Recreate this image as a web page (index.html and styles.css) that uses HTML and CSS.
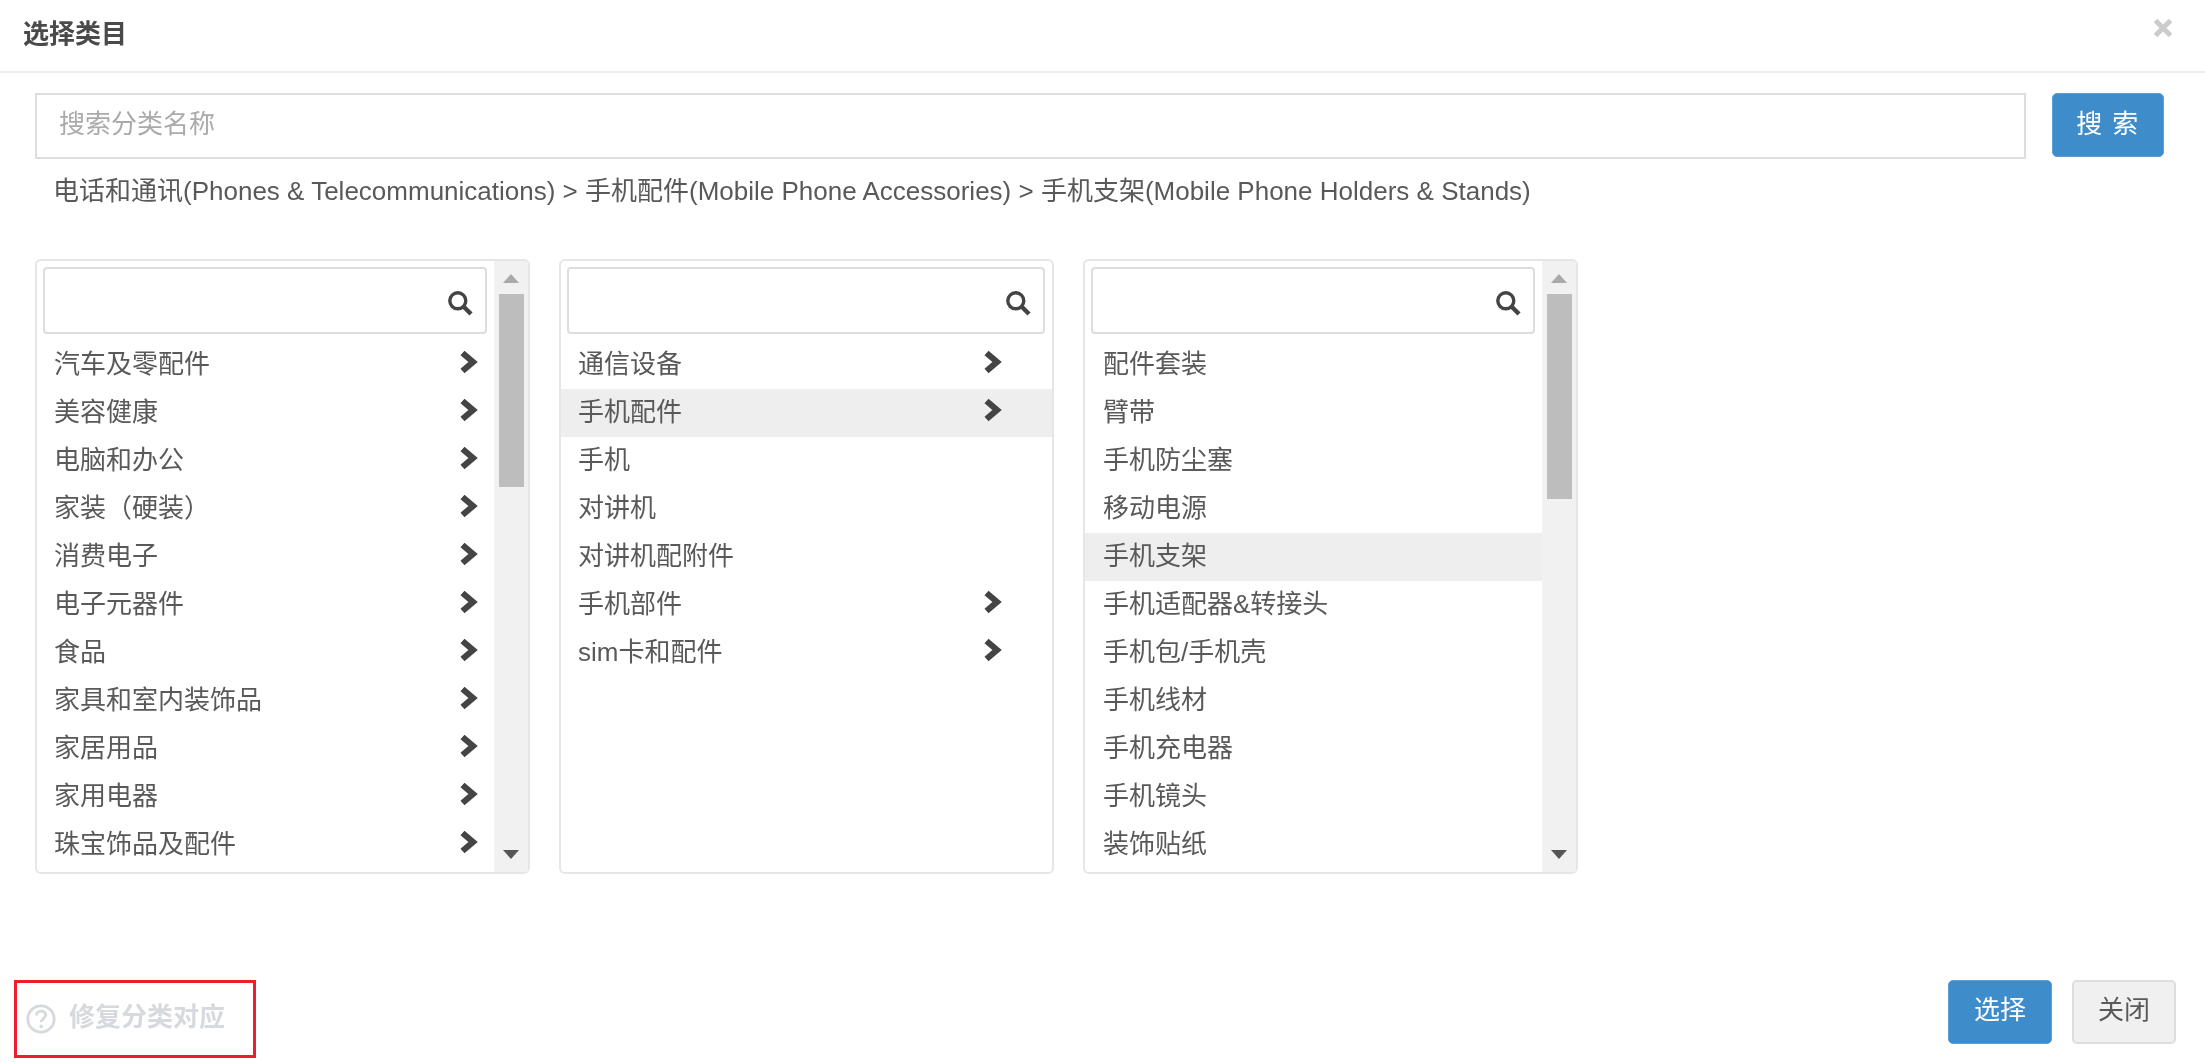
FILE: index.html
```html
<!DOCTYPE html>
<html lang="zh-CN">
<head>
<meta charset="utf-8">
<title>选择类目</title>
<link rel="stylesheet" href="styles.css">
</head>
<body>
<svg class="defs" width="0" height="0" aria-hidden="true">
  <symbol id="chev" viewBox="0 0 19 24"><path d="M3.5 3 L14 12 L3.5 21" fill="none" stroke="currentColor" stroke-width="6.2" stroke-linejoin="miter"/></symbol>
  <symbol id="mag" viewBox="0 0 26 26"><circle cx="10.8" cy="10.8" r="8" fill="none" stroke="currentColor" stroke-width="3.4"/><path d="M16.5 16.5 L24 24" fill="none" stroke="currentColor" stroke-width="4.4"/></symbol>
</svg>
<div class="dialog">
  <header class="head">
    <h1 class="title">选择类目</h1>
    <svg class="close" viewBox="0 0 20 20"><path d="M2.5 2.5 L17.5 17.5 M17.5 2.5 L2.5 17.5" stroke="currentColor" stroke-width="5" fill="none"/></svg>
  </header>
  <main class="body">
    <div class="search">
      <input class="search-input" type="text" placeholder="搜索分类名称">
      <button class="btn btn-primary btn-search">搜 索</button>
    </div>
    <p class="crumb">电话和通讯(Phones &amp; Telecommunications) &gt; 手机配件(Mobile Phone Accessories) &gt; 手机支架(Mobile Phone Holders &amp; Stands)</p>
    <div class="panels">
      <section class="panel">
        <div class="list">
          <div class="filter"><svg class="mag"><use href="#mag"/></svg></div>
          <ul class="rows">
            <li class="row"><span class="label">汽车及零配件</span><svg class="chev"><use href="#chev"/></svg></li>
            <li class="row"><span class="label">美容健康</span><svg class="chev"><use href="#chev"/></svg></li>
            <li class="row"><span class="label">电脑和办公</span><svg class="chev"><use href="#chev"/></svg></li>
            <li class="row"><span class="label">家装（硬装）</span><svg class="chev"><use href="#chev"/></svg></li>
            <li class="row"><span class="label">消费电子</span><svg class="chev"><use href="#chev"/></svg></li>
            <li class="row"><span class="label">电子元器件</span><svg class="chev"><use href="#chev"/></svg></li>
            <li class="row"><span class="label">食品</span><svg class="chev"><use href="#chev"/></svg></li>
            <li class="row"><span class="label">家具和室内装饰品</span><svg class="chev"><use href="#chev"/></svg></li>
            <li class="row"><span class="label">家居用品</span><svg class="chev"><use href="#chev"/></svg></li>
            <li class="row"><span class="label">家用电器</span><svg class="chev"><use href="#chev"/></svg></li>
            <li class="row"><span class="label">珠宝饰品及配件</span><svg class="chev"><use href="#chev"/></svg></li>
          </ul>
        </div>
        <div class="scroll"><span class="arrow-up"></span><span class="thumb thumb-a"></span><span class="arrow-down"></span></div>
      </section>
      <section class="panel panel-plain">
        <div class="list">
          <div class="filter"><svg class="mag"><use href="#mag"/></svg></div>
          <ul class="rows">
            <li class="row"><span class="label">通信设备</span><svg class="chev"><use href="#chev"/></svg></li>
            <li class="row row-on"><span class="label">手机配件</span><svg class="chev"><use href="#chev"/></svg></li>
            <li class="row"><span class="label">手机</span></li>
            <li class="row"><span class="label">对讲机</span></li>
            <li class="row"><span class="label">对讲机配附件</span></li>
            <li class="row"><span class="label">手机部件</span><svg class="chev"><use href="#chev"/></svg></li>
            <li class="row"><span class="label">sim卡和配件</span><svg class="chev"><use href="#chev"/></svg></li>
          </ul>
        </div>
      </section>
      <section class="panel panel-leaf">
        <div class="list">
          <div class="filter"><svg class="mag"><use href="#mag"/></svg></div>
          <ul class="rows">
            <li class="row"><span class="label">配件套装</span></li>
            <li class="row"><span class="label">臂带</span></li>
            <li class="row"><span class="label">手机防尘塞</span></li>
            <li class="row"><span class="label">移动电源</span></li>
            <li class="row row-on"><span class="label">手机支架</span></li>
            <li class="row"><span class="label">手机适配器&amp;转接头</span></li>
            <li class="row"><span class="label">手机包/手机壳</span></li>
            <li class="row"><span class="label">手机线材</span></li>
            <li class="row"><span class="label">手机充电器</span></li>
            <li class="row"><span class="label">手机镜头</span></li>
            <li class="row"><span class="label">装饰贴纸</span></li>
          </ul>
        </div>
        <div class="scroll"><span class="arrow-up"></span><span class="thumb thumb-b"></span><span class="arrow-down"></span></div>
      </section>
    </div>
  </main>
  <footer class="foot">
    <div class="fix">
      <svg class="help" viewBox="0 0 30 30"><circle cx="15" cy="15" r="13.2" fill="none" stroke="currentColor" stroke-width="2.8"/><path d="M10.4 11.6c0-2.8 2-4.5 4.7-4.5s4.6 1.6 4.6 4c0 3.4-4.5 3.5-4.5 7" fill="none" stroke="currentColor" stroke-width="2.8"/><circle cx="15.2" cy="22.4" r="1.8" fill="currentColor"/></svg>
      <span class="fix-text">修复分类对应</span>
    </div>
    <div class="actions">
      <button class="btn btn-primary btn-foot"><span class="btn-label">选择</span></button>
      <button class="btn btn-plain btn-foot"><span class="btn-label">关闭</span></button>
    </div>
  </footer>
</div>
</body>
</html>
```

FILE: styles.css
```css
* { box-sizing: border-box; }
html, body { margin: 0; padding: 0; background: #fff; }
body { font-family: "Liberation Sans", "Noto Sans CJK SC", sans-serif; font-size: 26px; color: #595959; }
.defs { display: block; height: 0; }
.dialog { display: flex; flex-direction: column; width: 2205px; height: 1062px; overflow: hidden; filter: blur(0.7px); }

.head { display: flex; justify-content: space-between; align-items: flex-start; height: 73px; padding: 0 32px 0 23px; border-bottom: 2px solid #eee; flex: none; }
.title { margin: 0; font-size: 26px; font-weight: 700; line-height: 68px; color: #4a4a4a; }
.close { width: 20px; height: 20px; margin-top: 18px; color: #ccc; }

.body { flex: 1; padding: 20px 41px 0 35px; }
.search { display: flex; align-items: flex-start; justify-content: space-between; }
.search-input { width: 1991px; height: 66px; padding: 0 22px 3px; border: 2px solid #ddd; background: #fff; font: inherit; color: #555; outline: none; }
.search-input::placeholder { color: #aaa; opacity: 1; }

.btn { border-radius: 5px; font: inherit; line-height: 1; padding: 0; }
.btn-primary { background: #3f8ccb; border: 1px solid #5a9ed6; color: #fff; }
.btn-plain { background: #f0f0f0; border: 2px solid #ddd; color: #595959; }
.btn-search { width: 112px; height: 64px; padding-bottom: 3px; letter-spacing: 1.5px; }
.btn-foot { width: 104px; height: 64px; }
.btn-label { display: block; margin-top: -5px; }

.crumb { margin: 14px 0 0; padding-left: 18px; line-height: 36px; font-size: 26px; white-space: nowrap; }

.panels { display: flex; gap: 29px; margin-top: 50px; }
.panel { display: flex; width: 495px; height: 615px; border: 2px solid #e6e6e6; border-radius: 6px; overflow: hidden; background: #fff; }
.list { flex: 1; min-width: 0; }
.filter { display: flex; align-items: center; justify-content: flex-end; height: 67px; margin: 6px 7px 7px 6px; padding: 4px 12px 0 0; border: 2px solid #ddd; border-radius: 4px; }
.panel-plain .filter { margin-right: 7px; margin-left: 6px; padding-right: 12px; }
.mag { width: 26px; height: 26px; color: #444; }
.rows { margin: 0; padding: 0; list-style: none; }
.row { display: flex; align-items: center; justify-content: space-between; height: 48px; padding: 0 16px 0 17px; line-height: 48px; white-space: nowrap; }
.panel-plain .row { padding-right: 50px; }
.panel-leaf .row { padding-left: 18px; }
.label { display: block; margin-top: -3px; }
.row-on { background: #eee; }
.chev { width: 19px; height: 24px; margin-top: -6px; color: #444; }

.scroll { display: flex; flex-direction: column; align-items: center; width: 34px; flex: none; background: #f1f1f1; }
.arrow-up { width: 0; height: 0; margin-top: 13px; border: 8px solid transparent; border-top: 0; border-bottom: 9px solid #aaa; }
.thumb { width: 25px; margin-top: 11px; background: #bdbdbd; }
.thumb-a { height: 193px; }
.thumb-b { height: 205px; }
.arrow-down { width: 0; height: 0; margin-top: auto; margin-bottom: 13px; border: 8px solid transparent; border-bottom: 0; border-top: 9px solid #555; }

.foot { display: flex; justify-content: space-between; align-items: flex-start; flex: none; height: 82px; padding: 0 29px 0 14px; }
.fix { display: flex; align-items: flex-start; width: 242px; height: 78px; padding: 21px 0 0 9px; border: 3px solid #ed1c2e; color: #d6d9dd; }
.help { width: 30px; height: 30px; flex: none; }
.fix-text { margin: -2px 0 0 13px; font-weight: 700; line-height: 30px; white-space: nowrap; }
.actions { display: flex; gap: 20px; }
```
